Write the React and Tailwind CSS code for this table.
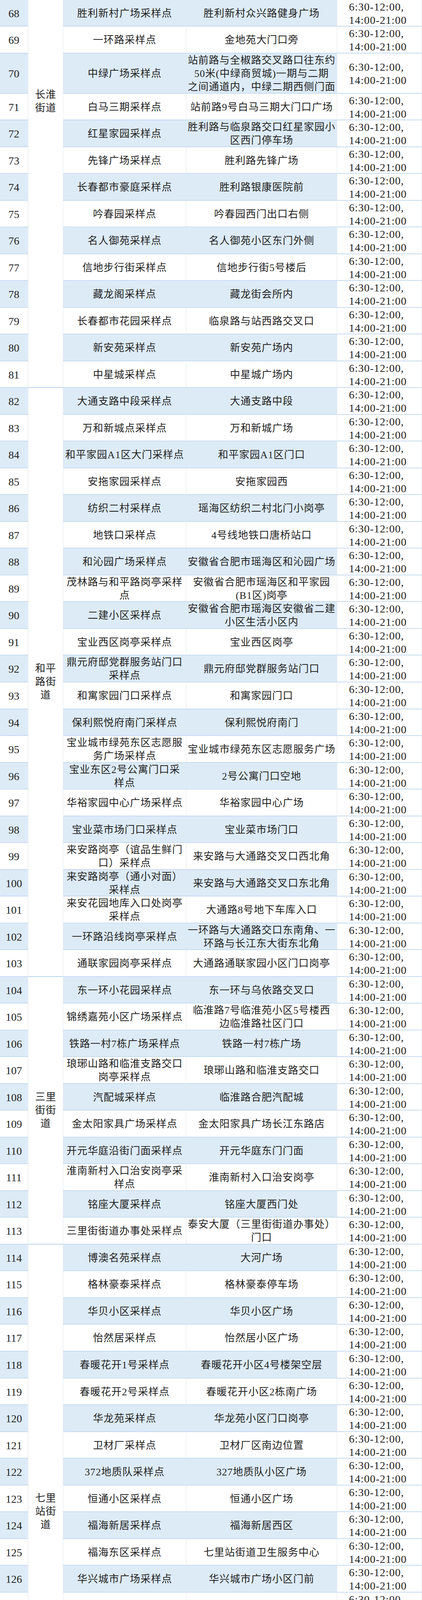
import React from "react";

const rows = [
  [68, "胜利新村广场采样点", "胜利新村众兴路健身广场"],
  [69, "一环路采样点", "金地苑大门口旁"],
  [70, "中绿广场采样点", "站前路与全椒路交叉路口往东约|50米(中绿商贸城)一期与二期|之间通道内，中绿二期西侧门面"],
  [71, "白马三期采样点", "站前路9号白马三期大门口广场"],
  [72, "红星家园采样点", "胜利路与临泉路交口红星家园小|区西门停车场"],
  [73, "先锋广场采样点", "胜利路先锋广场"],
  [74, "长春都市豪庭采样点", "胜利路银康医院前"],
  [75, "吟春园采样点", "吟春园西门出口右侧"],
  [76, "名人御苑采样点", "名人御苑小区东门外侧"],
  [77, "信地步行街采样点", "信地步行街5号楼后"],
  [78, "藏龙阁采样点", "藏龙街会所内"],
  [79, "长春都市花园采样点", "临泉路与站西路交叉口"],
  [80, "新安苑采样点", "新安苑广场内"],
  [81, "中星城采样点", "中星城广场内"],
  [82, "大通支路中段采样点", "大通支路中段"],
  [83, "万和新城点采样点", "万和新城广场"],
  [84, "和平家园A1区大门采样点", "和平家园A1区门口"],
  [85, "安拖家园采样点", "安拖家园西"],
  [86, "纺织二村采样点", "瑶海区纺织二村北门小岗亭"],
  [87, "地铁口采样点", "4号线地铁口唐桥站口"],
  [88, "和沁园广场采样点", "安徽省合肥市瑶海区和沁园广场"],
  [89, "茂林路与和平路岗亭采样|点", "安徽省合肥市瑶海区和平家园|(B1区)岗亭"],
  [90, "二建小区采样点", "安徽省合肥市瑶海区安徽省二建|小区生活小区内"],
  [91, "宝业西区岗亭采样点", "宝业西区岗亭"],
  [92, "鼎元府邸党群服务站门口|采样点", "鼎元府邸党群服务站门口"],
  [93, "和寓家园门口采样点", "和寓家园门口"],
  [94, "保利熙悦府南门采样点", "保利熙悦府南门"],
  [95, "宝业城市绿苑东区志愿服|务广场采样点", "宝业城市绿苑东区志愿服务广场"],
  [96, "宝业东区2号公寓门口采|样点", "2号公寓门口空地"],
  [97, "华裕家园中心广场采样点", "华裕家园中心广场"],
  [98, "宝业菜市场门口采样点", "宝业菜市场门口"],
  [99, "来安路岗亭（谊品生鲜门|口）采样点", "来安路与大通路交叉口西北角"],
  [100, "来安路岗亭（通小对面）|采样点", "来安路与大通路交叉口东北角"],
  [101, "来安花园地库入口处岗亭|采样点", "大通路8号地下车库入口"],
  [102, "一环路沿线岗亭采样点", "一环路与大通路交口东南角、一|环路与长江东大街东北角"],
  [103, "通联家园岗亭采样点", "大通路通联家园小区门口岗亭"],
  [104, "东一环小花园采样点", "东一环与乌依路交叉口"],
  [105, "锦绣嘉苑小区广场采样点", "临淮路7号临淮苑小区5号楼西|边临淮路社区门口"],
  [106, "铁路一村7栋广场采样点", "铁路一村7栋广场"],
  [107, "琅琊山路和临淮支路交口|岗亭采样点", "琅琊山路和临淮支路交口"],
  [108, "汽配城采样点", "临淮路合肥汽配城"],
  [109, "金太阳家具广场采样点", "金太阳家具广场长江东路店"],
  [110, "开元华庭沿街门面采样点", "开元华庭东门门面"],
  [111, "淮南新村入口治安岗亭采|样点", "淮南新村入口治安岗亭"],
  [112, "铭座大厦采样点", "铭座大厦西门处"],
  [113, "三里街街道办事处采样点", "泰安大厦（三里街街道办事处）|门口"],
  [114, "博澳名苑采样点", "大河广场"],
  [115, "格林豪泰采样点", "格林豪泰停车场"],
  [116, "华贝小区采样点", "华贝小区广场"],
  [117, "怡然居采样点", "怡然居小区广场"],
  [118, "春暖花开1号采样点", "春暖花开小区4号楼架空层"],
  [119, "春暖花开2号采样点", "春暖花开小区2栋南广场"],
  [120, "华龙苑采样点", "华龙苑小区门口岗亭"],
  [121, "卫材厂采样点", "卫材厂区南边位置"],
  [122, "372地质队采样点", "327地质队小区广场"],
  [123, "恒通小区采样点", "恒通小区广场"],
  [124, "福海新居采样点", "福海新居西区"],
  [125, "福海东区采样点", "七里站街道卫生服务中心"],
  [126, "华兴城市广场采样点", "华兴城市广场小区门前"],
  [127, "新海西苑采样点", "新海西苑小区内8号楼"],
  [128, "东方摩域采样点", "当涂路200号东方摩域广场"],
  [129, "梦和雅居二期采样点", "梦和雅居二期5/6栋道路中间"],
  [130, "梦和雅居一期采样点", "梦和雅居一期小区南门广场"],
  [131, "国安家园采样点", "国安家园广场"],
  [132, "闽商国贸采样点", "闽商国贸"],
  [133, "梦和苑小区采样点", "梦和苑东区门口"],
  [134, "蓝天公寓采样点", "二十埠河蓝天公寓小区东门处"],
  [135, "东升花园采样点", "站前东路东升花园大门东边50|米"],
  [136, "站塘路采样点", "站塘路东苑雅居小区西门右侧"],
  [137, "陈集路采样点", "陈集路璟泰赢家广场小区南门处"],
  [138, "天使苑、铂金时代采样点", "风阳东路天使苑、铂金时代北门|右侧"],
  [139, "风阳东路采样点", "风阳东路景辉家园小区南门路边"],
  [140, "香江世纪名城采样点", "临泉路香江世纪名城小区内"],
  [141, "江晨园采样点", "临泉路与当涂路交口江晨园小区|内"],
];

const groups = {
  68: { lines: ["长淮", "街道"], span: "row-span-14", align: "items-start pt-[226px]" },
  82: { lines: ["和平", "路街", "道"], span: "row-span-22", align: "items-center" },
  104: { lines: ["三里", "街街", "道"], span: "row-span-10", align: "items-center" },
  114: { lines: ["七里", "站街", "道"], span: "row-span-20", align: "items-center" },
  134: { lines: [], span: "row-span-8", align: "items-center" },
};

function Lines({ text }) {
  return (
    <div className="flex flex-col items-center">
      {text.split("|").map((l, i) => (
        <span key={i} className="block whitespace-nowrap leading-8.5">
          {l}
        </span>
      ))}
    </div>
  );
}

// spread 5002px over the 73 two-line rows: 68px (h-17) or 69px (h-17.25)
function rowHeightClass(n) {
  if (n === 70) return "h-25.75";
  const idx = n < 70 ? n - 68 : n - 69;
  const a = Math.floor(((idx + 1) * 5002) / 73) - Math.floor((idx * 5002) / 73);
  return a === 69 ? "h-17.25" : "h-17";
}

export default function App() {
  const cells = [];
  rows.forEach(([n, name, addr]) => {
    const blue = n % 2 === 0;
    const bg = blue ? "bg-[#ddebf7]" : "bg-white";
    const h = rowHeightClass(n);
    cells.push(
      <div
        key={`n${n}`}
        className={`${bg} ${h} overflow-hidden flex items-center justify-center pt-[3px] border-b-2 border-b-[#c8dbf0] border-r-2 border-r-[#eef1f5] text-[28px] leading-8.5`}
      >
        {n}
      </div>
    );
    const g = groups[n];
    if (g) {
      cells.push(
        <div
          key={`g${n}`}
          className={`${g.span} bg-white flex justify-center ${g.align} border-b-2 border-b-[#b9d2ec] border-r border-r-[#e2e7ec] text-[26px] leading-8.5 tracking-[1px]`}
        >
          <div className="flex flex-col items-center">
            {g.lines.map((l, i) => (
              <span key={i} className="block whitespace-nowrap leading-8.5">
                {l}
              </span>
            ))}
          </div>
        </div>
      );
    }
    cells.push(
      <div
        key={`a${n}`}
        className={`${bg} ${h} overflow-hidden flex items-center justify-center pt-[3px] border-b-2 border-b-[#c8dbf0] border-r ${
          blue ? "border-r-[#ddebf7]" : "border-r-[#e2e7ec]"
        } text-[26px] leading-8.5 tracking-[1px]`}
      >
        <Lines text={name} />
      </div>
    );
    cells.push(
      <div
        key={`b${n}`}
        className={`${bg} ${h} overflow-hidden flex items-center justify-center pt-[3px] border-b-2 border-b-[#c8dbf0] border-r border-r-[#e2e7ec] text-[26px] leading-8.5 tracking-[1px]`}
      >
        <Lines text={addr} />
      </div>
    );
    cells.push(
      <div
        key={`t${n}`}
        className={`bg-white ${h} overflow-hidden flex flex-col justify-center pl-[30px] pt-[3px] border-b-2 border-b-[#c8dbf0] border-r border-r-[#e2e7ec] text-[28px] leading-8.5 tracking-[1px]`}
      >
        <span className="block whitespace-nowrap leading-8.5">6:30-12:00,</span>
        <span className="block whitespace-nowrap leading-8.5">14:00-21:00</span>
      </div>
    );
  });

  return (
    <div className="w-[1080px] bg-white text-[#222222] font-['Liberation_Serif','Noto_Sans_CJK_SC',serif]">
      <div className="grid grid-cols-[73px_89px_315px_386px_217px]">{cells}</div>
    </div>
  );
}
